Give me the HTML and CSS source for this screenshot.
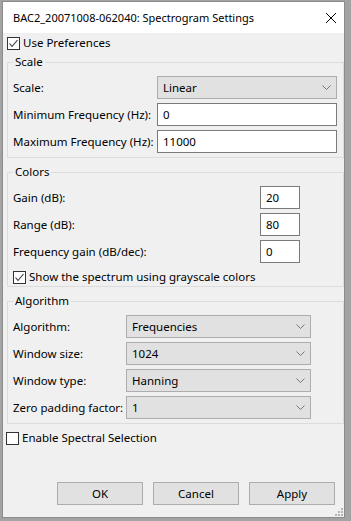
FILE: index.html
```html
<!DOCTYPE html>
<html lang="en">
<head>
  <meta charset="UTF-8" />
  <meta name="viewport" content="width=device-width, initial-scale=1.0" />
  <title>Spectrogram Settings</title>
  <link rel="stylesheet" href="styles.css">
</head>
<body>
  <div class="window">
    <div class="titlebar">
      <span class="title">BAC2_20071008-062040: Spectrogram Settings</span>
      <span class="close">
        <svg width="10" height="10" viewBox="0 0 10 10"><path d="M0 0L10 10M10 0L0 10" stroke="#000" stroke-width="1" fill="none"/></svg>
      </span>
    </div>

    <div class="content">
      <label class="check">
        <span class="box"><svg width="11" height="11" viewBox="0 0 11 11"><path d="M1.5 5.5L4 8.5L9.5 2" stroke="#333" stroke-width="1.1" fill="none"/></svg></span>
        Use Preferences
      </label>

      <fieldset class="group scale">
        <legend>Scale</legend>
        <div class="row">
          <span class="lbl">Scale:</span>
          <div class="select">Linear
            <svg class="chev" width="9" height="5" viewBox="0 0 9 5"><path d="M0.5 0.5L4.5 4.5L8.5 0.5" stroke="#777" stroke-width="1" fill="none"/></svg>
          </div>
        </div>
        <div class="row">
          <span class="lbl">Minimum Frequency (Hz):</span>
          <div class="input">0</div>
        </div>
        <div class="row">
          <span class="lbl">Maximum Frequency (Hz):</span>
          <div class="input">11000</div>
        </div>
      </fieldset>

      <fieldset class="group colors">
        <legend>Colors</legend>
        <div class="row">
          <span class="lbl">Gain (dB):</span>
          <div class="input">20</div>
        </div>
        <div class="row">
          <span class="lbl">Range (dB):</span>
          <div class="input">80</div>
        </div>
        <div class="row">
          <span class="lbl">Frequency gain (dB/dec):</span>
          <div class="input">0</div>
        </div>
        <label class="check inner-check">
          <span class="box"><svg width="11" height="11" viewBox="0 0 11 11"><path d="M1.5 5.5L4 8.5L9.5 2" stroke="#333" stroke-width="1.1" fill="none"/></svg></span>
          Show the spectrum using grayscale colors
        </label>
      </fieldset>

      <fieldset class="group algo">
        <legend>Algorithm</legend>
        <div class="row">
          <span class="lbl">Algorithm:</span>
          <div class="select">Frequencies
            <svg class="chev" width="9" height="5" viewBox="0 0 9 5"><path d="M0.5 0.5L4.5 4.5L8.5 0.5" stroke="#777" stroke-width="1" fill="none"/></svg>
          </div>
        </div>
        <div class="row">
          <span class="lbl">Window size:</span>
          <div class="select">1024
            <svg class="chev" width="9" height="5" viewBox="0 0 9 5"><path d="M0.5 0.5L4.5 4.5L8.5 0.5" stroke="#777" stroke-width="1" fill="none"/></svg>
          </div>
        </div>
        <div class="row">
          <span class="lbl">Window type:</span>
          <div class="select">Hanning
            <svg class="chev" width="9" height="5" viewBox="0 0 9 5"><path d="M0.5 0.5L4.5 4.5L8.5 0.5" stroke="#777" stroke-width="1" fill="none"/></svg>
          </div>
        </div>
        <div class="row">
          <span class="lbl">Zero padding factor:</span>
          <div class="select">1
            <svg class="chev" width="9" height="5" viewBox="0 0 9 5"><path d="M0.5 0.5L4.5 4.5L8.5 0.5" stroke="#777" stroke-width="1" fill="none"/></svg>
          </div>
        </div>
      </fieldset>

      <label class="check spectral">
        <span class="box"></span>
        Enable Spectral Selection
      </label>

      <div class="buttons">
        <button>OK</button>
        <button>Cancel</button>
        <button>Apply</button>
      </div>
    </div>

    <svg class="grip" width="8" height="8" viewBox="0 0 8 8" fill="#b4b4b4">
      <rect x="6" y="0" width="2" height="2"/>
      <rect x="3" y="3" width="2" height="2"/>
      <rect x="6" y="3" width="2" height="2"/>
      <rect x="0" y="6" width="2" height="2"/>
      <rect x="3" y="6" width="2" height="2"/>
      <rect x="6" y="6" width="2" height="2"/>
    </svg>
  </div>
</body>
</html>
```

FILE: styles.css
```css
:root {
  --face: #f0f0f0;
  --ctl: #e1e1e1;
  --ctl-border: #adadad;
  --edit-border: #7a7a7a;
  --group-border: #dcdcdc;
  --font: "Noto Sans", "Open Sans", sans-serif;
}

* {
  box-sizing: border-box;
  margin: 0;
  padding: 0;
}

body {
  width: 351px;
  height: 521px;
  overflow: hidden;
  background: #a3a3a3;
  font-family: var(--font);
  font-size: 11.5px;
  color: #000;
}

.window {
  position: relative;
  margin: 1px 0 0 2px;
  width: 343px;
  height: 517px;
  border: 1px solid #8c8c8c;
  background: var(--face);
  display: flex;
  flex-direction: column;
}

.titlebar {
  height: 31px;
  background: #fff;
  display: flex;
  align-items: center;
  justify-content: space-between;
  padding: 0 8px 0 10px;
  font-size: 11px;
}

.close svg {
  display: block;
}

.content {
  flex: 1;
  display: flex;
  flex-direction: column;
  padding: 2px 0 12px 4px;
}

.check {
  display: flex;
  align-items: center;
  height: 16px;
  line-height: 16px;
  white-space: nowrap;
}

.box {
  width: 13px;
  height: 13px;
  border: 1px solid #333;
  background: #fff;
  margin-right: 3px;
  flex: none;
}

.box svg {
  display: block;
}

.group {
  min-width: 0;
  border: 1px solid var(--group-border);
  margin-top: 6px;
  padding: 6px 6px 4px 5px;
}

.group:first-of-type {
  margin-top: 3px;
}

.group legend {
  padding: 0 2px;
  line-height: 16px;
}

.row {
  display: flex;
  align-items: center;
  height: 23px;
}

.row + .row {
  margin-top: 4px;
}

.lbl {
  flex: 1;
  min-width: 0;
  white-space: nowrap;
}

.select,
.input {
  height: 23px;
  display: flex;
  align-items: center;
  flex: none;
  padding-left: 5px;
}

.select {
  background: var(--ctl);
  border: 1px solid var(--ctl-border);
  justify-content: space-between;
  padding-right: 5px;
}

.input {
  background: #fff;
  border: 1px solid var(--edit-border);
}

.scale .select,
.scale .input {
  width: 180px;
}

.colors {
  padding-right: 43px;
  padding-bottom: 1px;
}

.colors .input {
  width: 40px;
}

.inner-check {
  margin-top: 6px;
}

.algo {
  padding-right: 32px;
}

.algo .select {
  width: 185px;
}

.spectral {
  margin: 6px 0 0 -1px;
}

.buttons {
  margin-top: auto;
  display: flex;
  justify-content: flex-end;
  gap: 10px;
  padding-right: 9px;
}

button {
  width: 86px;
  height: 23px;
  background: var(--ctl);
  border: 1px solid var(--ctl-border);
  font-family: var(--font);
  font-size: 11.5px;
  color: #000;
}

.grip {
  position: absolute;
  right: 1px;
  bottom: 1px;
}
```
